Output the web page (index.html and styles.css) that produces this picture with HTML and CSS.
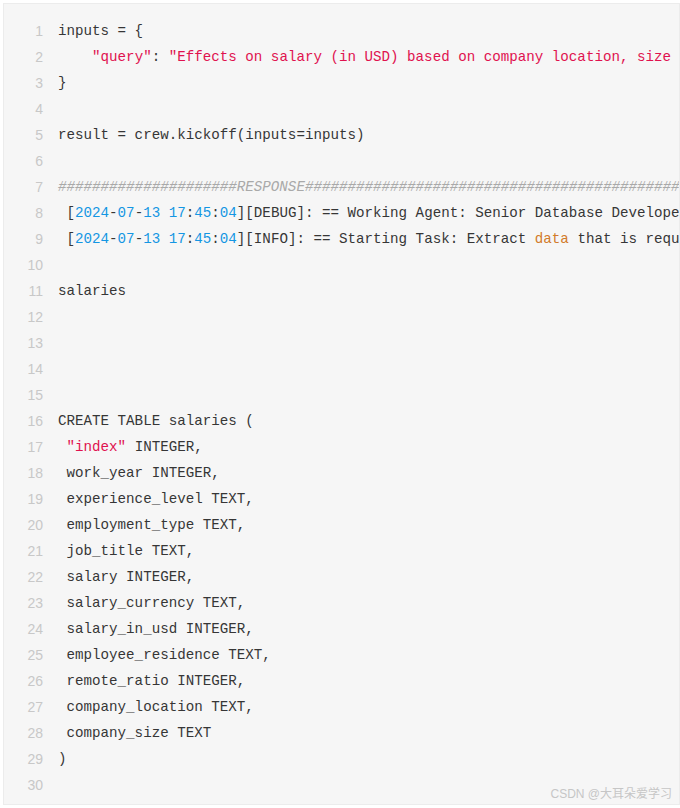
FILE: index.html
```html
<!DOCTYPE html>
<html>
<head>
<meta charset="utf-8">
<link rel="stylesheet" href="styles.css">
</head>
<body>
<div class="code-box">
  <ol class="lines">
    <li><span class="ln">1</span><code>inputs = {</code></li>
    <li><span class="ln">2</span><code>    <span class="str">"query"</span>: <span class="str">"Effects on salary (in USD) based on company location, size</span></code></li>
    <li><span class="ln">3</span><code>}</code></li>
    <li><span class="ln">4</span><code></code></li>
    <li><span class="ln">5</span><code>result = crew.kickoff(inputs=inputs)</code></li>
    <li><span class="ln">6</span><code></code></li>
    <li><span class="ln">7</span><code class="cmt">#####################RESPONSE############################################</code></li>
    <li><span class="ln">8</span><code> [<span class="num">2024</span>-<span class="num">07</span>-<span class="num">13</span> <span class="num">17</span>:<span class="num">45</span>:<span class="num">04</span>][DEBUG]: == Working Agent: Senior Database Develope</code></li>
    <li><span class="ln">9</span><code> [<span class="num">2024</span>-<span class="num">07</span>-<span class="num">13</span> <span class="num">17</span>:<span class="num">45</span>:<span class="num">04</span>][INFO]: == Starting Task: Extract <span class="kw">data</span> that is requ</code></li>
    <li><span class="ln">10</span><code></code></li>
    <li><span class="ln">11</span><code>salaries</code></li>
    <li><span class="ln">12</span><code></code></li>
    <li><span class="ln">13</span><code></code></li>
    <li><span class="ln">14</span><code></code></li>
    <li><span class="ln">15</span><code></code></li>
    <li><span class="ln">16</span><code>CREATE TABLE salaries (</code></li>
    <li><span class="ln">17</span><code> <span class="str">"index"</span> INTEGER,</code></li>
    <li><span class="ln">18</span><code> work_year INTEGER,</code></li>
    <li><span class="ln">19</span><code> experience_level TEXT,</code></li>
    <li><span class="ln">20</span><code> employment_type TEXT,</code></li>
    <li><span class="ln">21</span><code> job_title TEXT,</code></li>
    <li><span class="ln">22</span><code> salary INTEGER,</code></li>
    <li><span class="ln">23</span><code> salary_currency TEXT,</code></li>
    <li><span class="ln">24</span><code> salary_in_usd INTEGER,</code></li>
    <li><span class="ln">25</span><code> employee_residence TEXT,</code></li>
    <li><span class="ln">26</span><code> remote_ratio INTEGER,</code></li>
    <li><span class="ln">27</span><code> company_location TEXT,</code></li>
    <li><span class="ln">28</span><code> company_size TEXT</code></li>
    <li><span class="ln">29</span><code>)</code></li>
    <li><span class="ln">30</span><code></code></li>
  </ol>
  <div class="watermark">CSDN @大耳朵爱学习</div>
</div>
</body>
</html>
```

FILE: styles.css
```css
html, body {
  margin: 0;
  padding: 0;
  background: #ffffff;
}

.code-box {
  position: relative;
  margin: 3px 0 0 3px;
  width: 675px;
  height: 800px;
  border: 1px solid #ececec;
  background: #f6f6f6;
  overflow: hidden;
  box-sizing: content-box;
}

.lines {
  list-style: none;
  margin: 0;
  padding: 14px 0 0 0;
}

.lines li {
  display: flex;
  height: 26px;
  line-height: 26px;
  white-space: pre;
}

.ln {
  flex: 0 0 39px;
  text-align: right;
  font-family: "Liberation Sans", Arial, sans-serif;
  font-size: 14px;
  color: #c8c8c8;
}

.lines code {
  margin-left: 15px;
  font-family: "Liberation Mono", "DejaVu Sans Mono", monospace;
  font-size: 14.2px;
  color: #363636;
  white-space: pre;
}

.str {
  color: #e0124f;
}

.num {
  color: #1496e3;
}

.kw {
  color: #d27b2a;
}

.lines code.cmt {
  color: #a9a9a9;
  font-style: italic;
}

.watermark {
  position: absolute;
  right: 7px;
  bottom: 2px;
  font-family: "Liberation Sans", "Noto Sans CJK SC", sans-serif;
  font-size: 12px;
  line-height: 16px;
  color: #c6c6c6;
}
```
